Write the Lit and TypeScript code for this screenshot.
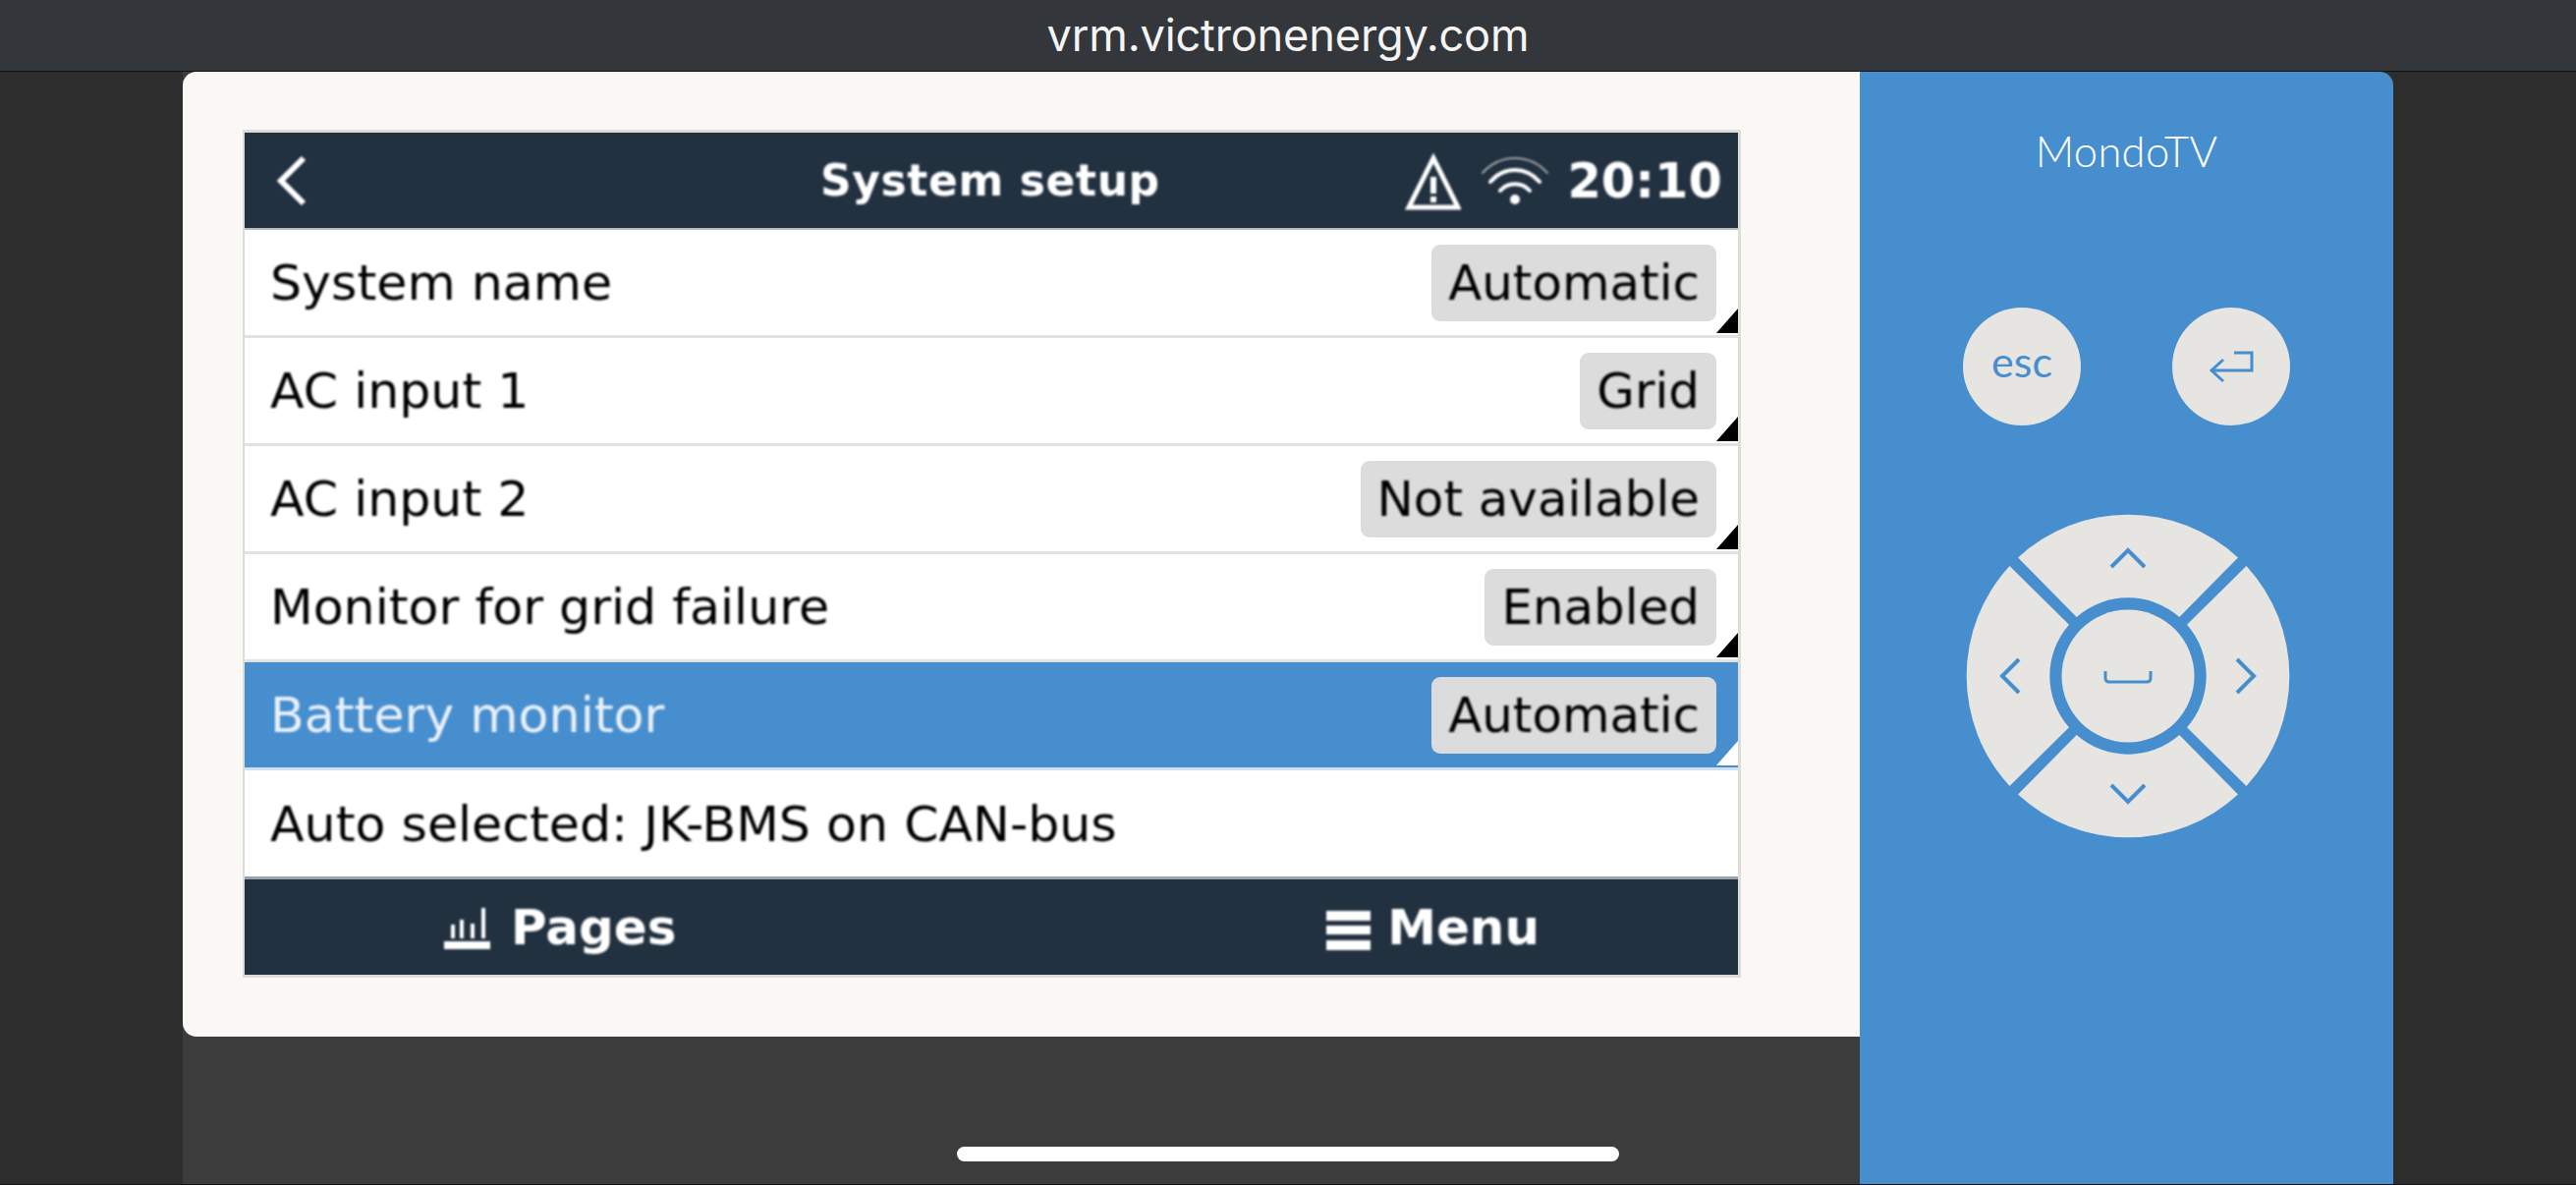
import { LitElement, html, css, svg } from "lit";
import { customElement } from "lit/decorators.js";

const rows = [
  { label: "System name", value: "Automatic" },
  { label: "AC input 1", value: "Grid" },
  { label: "AC input 2", value: "Not available" },
  { label: "Monitor for grid failure", value: "Enabled" },
  { label: "Battery monitor", value: "Automatic", selected: true },
  { label: "Auto selected: JK-BMS on CAN-bus" },
];

const wedge = (rot: number) => svg`
  <path transform="rotate(${rot} 165 165)"
    d="M 53 44.5 A 165 165 0 0 1 277 44.5 L 217.3 105 A 79.4 79.4 0 0 0 112.7 105 Z" fill="#e6e5e1"/>`;

@customElement("app-root")
export class AppRoot extends LitElement {
  static styles = css`
    :host { display: block; width: 2622px; height: 1206px; overflow: hidden; position: relative; background: #2d2d2d; font-family: "DejaVu Sans", sans-serif; }
    .topbar { height: 70px; background: #33363a; border-bottom: 1px solid #101112; box-sizing: content-box; display: flex; align-items: center; justify-content: center; color: #f4f4f4; font: 400 45.2px "Inter", "Liberation Sans", sans-serif; letter-spacing: -0.2px; padding-bottom: 2px; }
    .body { height: 1132px; padding-left: 186px; display: flex; border-bottom: 1px solid #111; }
    .left { width: 1707px; display: flex; flex-direction: column; background: #3c3c3c; }
    .card { height: 982px; box-sizing: border-box; background: #f9f8f4; border-radius: 14px 0 0 14px; padding: 59px 121px 60px 61px; }
    .screen { height: 863px; box-sizing: border-box; border: 3px solid #dcdcd8; border-left-width: 2px; background: #fff; display: flex; flex-direction: column; }
    .head { height: 97px; flex: none; background: #223140; color: #fff; display: flex; align-items: center; position: relative; border-bottom: 2px solid #b6bcc2; box-sizing: content-box; }
    .soft { filter: blur(0.8px); }
    .back { margin-left: 30px; width: 34px; height: 52px; }
    .title { position: absolute; left: 586px; top: 24px; font-weight: 700; font-size: 44px; line-height: 50px; letter-spacing: 0.6px; white-space: nowrap; }
    .status { margin-left: auto; margin-right: 16px; display: flex; align-items: center; }
    .warn { width: 62px; height: 62px; margin-right: 20px; margin-top: 2px; }
    .wifi { width: 70px; height: 50px; margin-right: 18px; }
    .time { font-weight: 700; font-size: 49.5px; line-height: 56px; }
    .row { height: 110px; box-sizing: border-box; flex: none; display: flex; align-items: center; justify-content: space-between; padding: 0 22px 0 26px; position: relative; border-bottom: 3px solid #e2e2e2; color: #000; font-size: 50.6px; white-space: nowrap; }
    .row.sel { background: #478ecf; color: #e9f1f9; border-bottom-color: #cfe0f0; }
    .row.last { border-bottom: 0; height: 108px; }
    .pill { background: #dcdcdc; color: #000; height: 78px; box-sizing: border-box; padding: 0 17px; border-radius: 9px; display: flex; align-items: center; font-size: 49.9px; }
    .tri { position: absolute; right: 0; bottom: 2px; width: 22px; height: 25px; background: #000; clip-path: polygon(100% 0, 100% 100%, 0 100%); }
    .sel .tri { background: #fff; }
    .foot { flex: 1; background: #223140; color: #fff; display: flex; justify-content: space-between; align-items: center; padding: 0 202px 0 203px; font-size: 50px; font-weight: 700; border-top: 3px solid #9aa3ab; }
    .foot .grp { display: flex; align-items: center; }
    .pages-i { width: 47px; height: 44px; margin-right: 21px; margin-top: 4px; }
    .menu-i { width: 45px; height: 40px; margin-right: 17px; margin-top: 6px; }
    .panel { width: 543px; background: #478ecf; border-top-right-radius: 14px; display: flex; flex-direction: column; align-items: center; color: #fff; }
    .name { margin-top: 54px; font: 300 43.5px/52px "Lato", sans-serif; color: #fff; letter-spacing: 0.3px; }
    .btns { margin-top: 134px; display: flex; gap: 93px; }
    .btn { width: 120px; height: 120px; border-radius: 50%; background: #e6e5e1; color: #478ecf; display: flex; align-items: center; justify-content: center; font: 400 43px "Lato", sans-serif; box-sizing: border-box; padding-bottom: 12px; }
    .btn.ret { padding: 0; }
    .btn svg { width: 120px; height: 120px; display: block; }
    .pad { margin-top: 90px; width: 330px; height: 330px; display: block; margin-left: 3px; }
    .home { position: absolute; left: 974px; top: 1167px; width: 674px; height: 15px; border-radius: 8px; background: #fff; }
  `;

  render() {
    return html`
      <div class="topbar">vrm.victronenergy.com</div>
      <div class="body">
        <div class="left">
          <div class="card">
            <div class="screen">
              <div class="head">
                <svg class="back soft" viewBox="0 0 34 52"><path d="M30 3 L7 26 L30 49" fill="none" stroke="#fff" stroke-width="6"/></svg>
                <span class="title soft">System setup</span>
                <div class="status">
                  <svg class="warn soft" viewBox="0 0 62 62"><path d="M34 7 L59 57 L9 57 Z" fill="none" stroke="#fff" stroke-width="5"/><rect x="31" y="26" width="6" height="17" fill="#fff"/><rect x="31" y="46" width="6" height="6" fill="#fff"/></svg>
                  <svg class="wifi soft" viewBox="0 0 70 50" fill="none" stroke="#fff" stroke-linecap="round">
                    <path d="M2 17 C 20 -3 50 -3 68 17" stroke-width="2" opacity=".55"/>
                    <path d="M10 26 C 24 10 46 10 60 26" stroke-width="4"/>
                    <path d="M20 35 C 28 26 42 26 50 35" stroke-width="4"/>
                    <circle cx="35" cy="44" r="5" fill="#fff" stroke="none"/>
                  </svg>
                  <span class="time soft">20:10</span>
                </div>
              </div>
              ${rows.map(
                (r, i) => html`
                  <div class="row ${r.selected ? "sel" : ""} ${i === rows.length - 1 ? "last" : ""}">
                    <span class="soft">${r.label}</span>
                    ${r.value
                      ? html`<span class="pill"><span class="soft">${r.value}</span></span><i class="tri"></i>`
                      : ""}
                  </div>
                `
              )}
              <div class="foot">
                <div class="grp">
                  <svg class="pages-i soft" viewBox="0 0 47 44"><rect x="0" y="34" width="47" height="8" fill="#fff"/><rect x="7" y="17" width="4" height="14" fill="#fff"/><rect x="16" y="12" width="4" height="19" fill="#fff"/><rect x="27" y="16" width="4" height="15" fill="#fff"/><rect x="38" y="0" width="4" height="31" fill="#fff"/></svg>
                  <span class="soft">Pages</span>
                </div>
                <div class="grp">
                  <svg class="menu-i soft" viewBox="0 0 45 40"><rect width="45" height="10" fill="#fff"/><rect y="15" width="45" height="9" fill="#fff"/><rect y="30" width="45" height="10" fill="#fff"/></svg>
                  <span class="soft">Menu</span>
                </div>
              </div>
            </div>
          </div>
        </div>
        <div class="panel">
          <div class="name">MondoTV</div>
          <div class="btns">
            <div class="btn">esc</div>
            <div class="btn ret">
              <svg viewBox="0 0 120 120" fill="none" stroke="#478ecf" stroke-width="3"><path d="M63 46 H81 V64 H40 M52 53 L40 64 L52 75"/></svg>
            </div>
          </div>
          <svg class="pad" viewBox="0 0 330 330">
            ${[0, 90, 180, 270].map(wedge)}
            <circle cx="165" cy="165" r="67.5" fill="#e6e5e1"/>
            <g fill="none" stroke="#478ecf" stroke-width="4">
              <path d="M148 54 L165 37 L182 54"/>
              <path d="M148 276 L165 293 L182 276"/>
              <path d="M54 148 L37 165 L54 182"/>
              <path d="M276 148 L293 165 L276 182"/>
              <path stroke-width="3" d="M142 160 V167 Q142 171 146 171 H184 Q188 171 188 167 V160"/>
            </g>
          </svg>
        </div>
      </div>
      <div class="home"></div>
    `;
  }
}
